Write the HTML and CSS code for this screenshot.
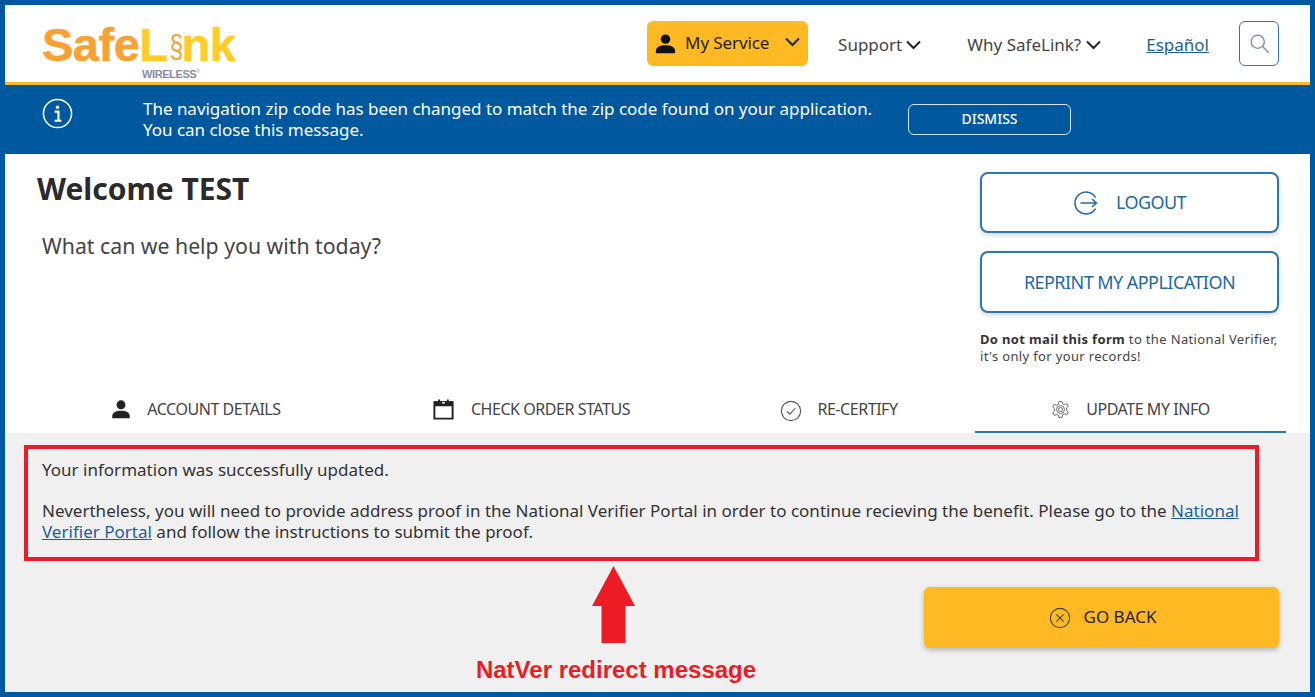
FILE: index.html
```html
<!DOCTYPE html>
<html lang="en">
<head>
<meta charset="utf-8">
<title>SafeLink Wireless</title>
<link rel="stylesheet" href="styles.css">
</head>
<body>
<div class="frame">
  <header class="header">
    <div class="logo">
      <div class="logo-word"><span class="logo-safe">Safe</span><span class="logo-link">L<span class="logo-clip">§</span>nk</span></div>
      <div class="logo-sub">WIRELESS<sup>®</sup></div>
    </div>
    <nav class="nav">
      <button class="service">
        <svg class="ico-person" viewBox="0 0 24 24"><circle cx="12" cy="7" r="5.4"/><path d="M1 23v-2.5C1 16 6 14 12 14s11 2 11 6.500V23z"/></svg>
        <span>My Service</span>
        <svg class="chev chev-service" viewBox="0 0 16 10"><path d="M1.500 1.500 8 8l6.500-6.500"/></svg>
      </button>
      <a class="nav-link nav-support">Support<svg class="chev" viewBox="0 0 16 10"><path d="M1.500 1.500 8 8l6.500-6.500"/></svg></a>
      <a class="nav-link nav-why">Why SafeLink?<svg class="chev" viewBox="0 0 16 10"><path d="M1.500 1.500 8 8l6.500-6.500"/></svg></a>
      <a class="nav-lang">Español</a>
      <button class="search"><svg viewBox="0 0 24 24"><circle cx="10" cy="10" r="7.500"/><path d="m15.500 15.500 7 7"/></svg></button>
    </nav>
  </header>

  <section class="banner">
    <svg class="ico-info" viewBox="0 0 32 32"><circle cx="16" cy="16" r="14.500"/><circle class="dot" cx="16" cy="9.500" r="1.800"/><path d="M13 14h4v9.500M13 23.500h7"/></svg>
    <p class="banner-text">The navigation zip code has been changed to match the zip code found on your application.<br>You can close this message.</p>
    <button class="dismiss">DISMISS</button>
  </section>

  <main class="top">
    <div class="welcome">
      <h1>Welcome TEST</h1>
      <p>What can we help you with today?</p>
    </div>
    <aside class="actions">
      <button class="outline">
        <svg class="ico-logout" viewBox="0 0 26 26"><path d="M22.500 7.500A11 11 0 1 0 22.500 18.500"/><path d="M7.500 13h15.500M19 9l4.500 4-4.500 4"/></svg>
        <span>LOGOUT</span>
      </button>
      <button class="outline outline-tall">REPRINT MY APPLICATION</button>
      <p class="note"><b>Do not mail this form</b> to the National Verifier, it's only for your records!</p>
    </aside>
  </main>

  <div class="tabs">
    <a class="tab">
      <svg class="tab-ico" viewBox="0 0 24 24"><circle cx="12" cy="7" r="5.400"/><path d="M1.500 23v-2.500C1.500 16 6 14 12 14s10.500 2 10.500 6.500V23z"/></svg>
      ACCOUNT DETAILS
    </a>
    <a class="tab">
      <svg class="tab-ico tab-cal" viewBox="0 0 24 24"><path class="cal-line" d="M2.500 5h19v17h-19z"/><path class="cal-bar" d="M2.500 4h4v-2h2v2h7v-2h2v2h4v5h-19z"/><path class="cal-dot" d="M10.500 5.500h3"/></svg>
      CHECK ORDER STATUS
    </a>
    <a class="tab tab-recert">
      <svg class="tab-ico tab-check" viewBox="0 0 24 24"><circle cx="12" cy="12" r="10.500"/><path d="m7.500 12.500 3.200 3 6-6.500"/></svg>
      RE-CERTIFY
    </a>
    <a class="tab tab-active">
      <svg class="tab-ico tab-gear" viewBox="0 0 24 24"><path d="M10 2h4l.7 2.800 2.500 1.100 2.600-1.400 2 3.500-2.100 2v3.200l2.100 2-2 3.500-2.600-1.400-2.500 1.100L14 22h-4l-.7-2.800-2.500-1.100-2.600 1.400-2-3.500 2.100-2v-3.200l-2.100-2 2-3.500 2.600 1.400 2.500-1.100z"/><circle cx="12" cy="12" r="5"/><circle cx="12" cy="12" r="2.500"/></svg>
      UPDATE MY INFO
    </a>
  </div>

  <section class="panel">
    <div class="message">
      <p>Your information was successfully updated.</p>
      <p>Nevertheless, you will need to provide address proof in the National Verifier Portal in order to continue recieving the benefit. Please go to the <a class="portal">National Verifier Portal</a> and follow the instructions to submit the proof.</p>
    </div>
    <div class="lower">
      <div class="annotation">
        <svg class="arrow" viewBox="0 0 43 77"><path d="M21.500 0 43 40H33.500V77H9.500V40H0z"/></svg>
        <strong>NatVer redirect message</strong>
      </div>
      <button class="goback">
        <svg class="ico-x" viewBox="0 0 24 24"><circle cx="12" cy="12" r="10.500"/><path d="m8 8 8 8M16 8l-8 8"/></svg>
        <span>GO BACK</span>
      </button>
    </div>
  </section>
</div>
</body>
</html>
```

FILE: styles.css
```css
* { box-sizing: border-box; }
html, body { margin: 0; padding: 0; }
body {
  width: 1315px;
  height: 697px;
  overflow: hidden;
  font-family: "Noto Sans", "Open Sans", sans-serif;
  color: #333;
  background: #fff;
}
button { font-family: inherit; cursor: pointer; }
p, h1 { margin: 0; }
svg { display: block; flex: none; }

.frame {
  width: 1315px;
  height: 697px;
  border: 5px solid #00589f;
  display: flex;
  flex-direction: column;
}

/* header */
.header {
  height: 80px;
  flex: none;
  border-bottom: 3px solid #fdb924;
  display: flex;
  justify-content: space-between;
  padding: 16px 31px 0 37px;
}
.logo { width: 200px; margin-top: 1px; }
.logo-word {
  font-family: "Liberation Sans", sans-serif;
  font-weight: 700;
  font-size: 47px;
  line-height: 46px;
  letter-spacing: -.5px;
  white-space: nowrap;
  -webkit-text-stroke: .5px currentColor;
}
.logo-safe { color: #f9a133; }
.logo-link { color: #ffcc29; }
.logo-clip {
  display: inline-block;
  width: 14px;
  text-align: center;
  font-size: 31px;
  font-weight: 400;
  color: #f9a133;
  letter-spacing: 0;
  vertical-align: 4px;
  transform: scaleX(.8);
  -webkit-text-stroke: 0;
}
.logo-sub {
  font-family: "Liberation Sans", sans-serif;
  font-weight: 700;
  font-size: 11px;
  line-height: 12px;
  letter-spacing: -.4px;
  color: #8a8ba3;
  margin: -2px 0 0 100px;
}
.logo-sub sup { font-size: 5px; line-height: 0; font-weight: 400; }

.nav { display: flex; align-items: flex-start; font-size: 17px; }
.service {
  width: 161px;
  height: 45px;
  border: 0;
  border-radius: 6px;
  background: #ffb923;
  color: #222;
  font-size: 17px;
  display: flex;
  align-items: center;
  padding: 0 7px 3px 8px;
  letter-spacing: -.1px;
}
.ico-person { width: 21px; height: 21px; fill: #111; margin: 3px 9px 0 0; }
.chev { width: 17px; height: 10px; fill: none; stroke: #222; stroke-width: 2; margin-left: 3px; }
.chev-service { margin-left: auto; }
.nav-link { display: flex; align-items: center; height: 47px; color: #444; white-space: nowrap; }
.nav-why .chev { margin-left: 4px; }
.nav-support { margin-left: 30px; }
.nav-why { margin-left: 45px; }
.nav-lang { height: 47px; line-height: 47px; margin-left: 44px; color: #1c5f96; text-decoration: underline; }
.search {
  width: 40px;
  height: 45px;
  margin-left: 30px;
  border: 1.500px solid #2f76ae;
  border-radius: 6px;
  background: #fff;
  padding: 0;
  display: flex;
  align-items: center;
  justify-content: center;
}
.search svg { width: 21px; height: 21px; fill: none; stroke: #6f8ea6; stroke-width: 1.500; }

/* banner */
.banner {
  height: 69px;
  flex: none;
  background: #00589f;
  color: #fff;
  display: flex;
  align-items: center;
  padding: 0 0 0 37px;
}
.ico-info { width: 31px; height: 31px; fill: none; stroke: #fff; stroke-width: 1.600; margin: -12px 70px 0 0; }
.ico-info .dot { fill: #fff; stroke: none; }
.ico-info path { stroke-width: 2.200; }
.banner-text { width: 765px; font-size: 17px; line-height: 21px; white-space: nowrap; letter-spacing: -.02px; margin-top: -2px; }
.dismiss {
  width: 163px;
  height: 31px;
  margin-top: -1px;
  border: 1.500px solid #d6e4ef;
  border-radius: 6px;
  background: transparent;
  color: #fff;
  font-size: 14px;
  font-weight: 500;
  padding: 0 0 2px;
}

/* top */
.top {
  height: 225px;
  flex: none;
  display: flex;
  justify-content: space-between;
  padding: 0 31px 0 32px;
}
.welcome h1 { font-size: 30px; line-height: 40px; font-weight: 700; color: #2b2b2b; margin-top: 15px; }
.welcome p { font-size: 21.250px; line-height: 30px; color: #444; margin: 22px 0 0 5px; }
.actions { width: 299px; padding-top: 18px; }
.outline {
  width: 100%;
  height: 61px;
  border: 2px solid #2f76ae;
  border-radius: 8px;
  background: #fff;
  color: #23689f;
  font-size: 18px;
  letter-spacing: -.55px;
  display: flex;
  align-items: center;
  justify-content: center;
  box-shadow: 0 2px 5px rgba(0, 0, 0, .18);
  margin-bottom: 18px;
  padding: 0 0 2px;
}
.outline-tall { height: 62px; padding: 0; }
.ico-logout { width: 26px; height: 26px; fill: none; stroke: #23689f; stroke-width: 1.500; margin: 2px 17px 0 0; }
.note { font-size: 13px; line-height: 17px; letter-spacing: .35px; color: #444; }
.note b { color: #333; }

/* tabs */
.tabs {
  height: 54px;
  flex: none;
  display: grid;
  grid-template-columns: 318px 352px 268px 311px;
  margin-left: 32px;
  width: 1249px;
}
.tab {
  display: flex;
  align-items: center;
  justify-content: center;
  padding-top: 5px;
  font-size: 16px;
  letter-spacing: -.45px;
  color: #444;
  white-space: nowrap;
  gap: 16px;
}
.tab-recert { margin-right: 4px; gap: 15px; }
.tab-active { border-bottom: 2px solid #2f76ae; padding-top: 7px; }
.tab-ico { width: 20px; height: 20px; fill: #222; }
.tab-cal { width: 23px; height: 24px; fill: none; stroke: #222; stroke-width: 2; }
.tab-cal .cal-bar { fill: #222; stroke: none; }
.tab-cal .cal-dot { stroke: #fff; stroke-width: 1.500; }
.tab-check { width: 22px; height: 22px; fill: none; stroke: #555; stroke-width: 1.200; margin-top: 5px; }
.tab-gear { width: 19px; height: 19px; fill: none; stroke: #555; stroke-width: 1.100; margin-top: 1px; }

/* panel */
.panel {
  flex: 1;
  background: #f0f0f0;
  padding: 12px 26px 0 19px;
  min-height: 0;
}
.message {
  width: 1235px;
  height: 116px;
  border: 4px solid #ed1c24;
  padding: 10px 14px 0 14px;
  font-size: 17px;
  line-height: 21px;
  letter-spacing: .01px;
  color: #333;
}
.message p + p { margin-top: 20px; }
.portal { color: #1c5f96; text-decoration: underline; }
.lower { display: flex; align-items: flex-start; justify-content: space-between; }
.annotation {
  display: flex;
  flex-direction: column;
  align-items: center;
  margin: 5px 0 0 453px;
  width: 278px;
}
.arrow { width: 43px; height: 77px; fill: #ed1c24; margin-right: 5px; }
.annotation strong {
  font-family: "Liberation Sans", sans-serif;
  font-size: 24px;
  line-height: 28px;
  color: #ed1c24;
  white-space: nowrap;
  margin-top: 13px;
}
.goback {
  width: 355px;
  height: 61px;
  margin: 26px 5px 0 0;
  border: 0;
  border-radius: 6px;
  background: #ffb923;
  color: #222;
  font-size: 17px;
  display: flex;
  align-items: center;
  justify-content: center;
  gap: 13px;
  box-shadow: 0 2px 5px rgba(0, 0, 0, .25);
  padding: 0 0 2px 2px;
}
.ico-x { width: 22px; height: 22px; fill: none; stroke: #443; stroke-width: 1.200; margin-top: 2px; }
```
